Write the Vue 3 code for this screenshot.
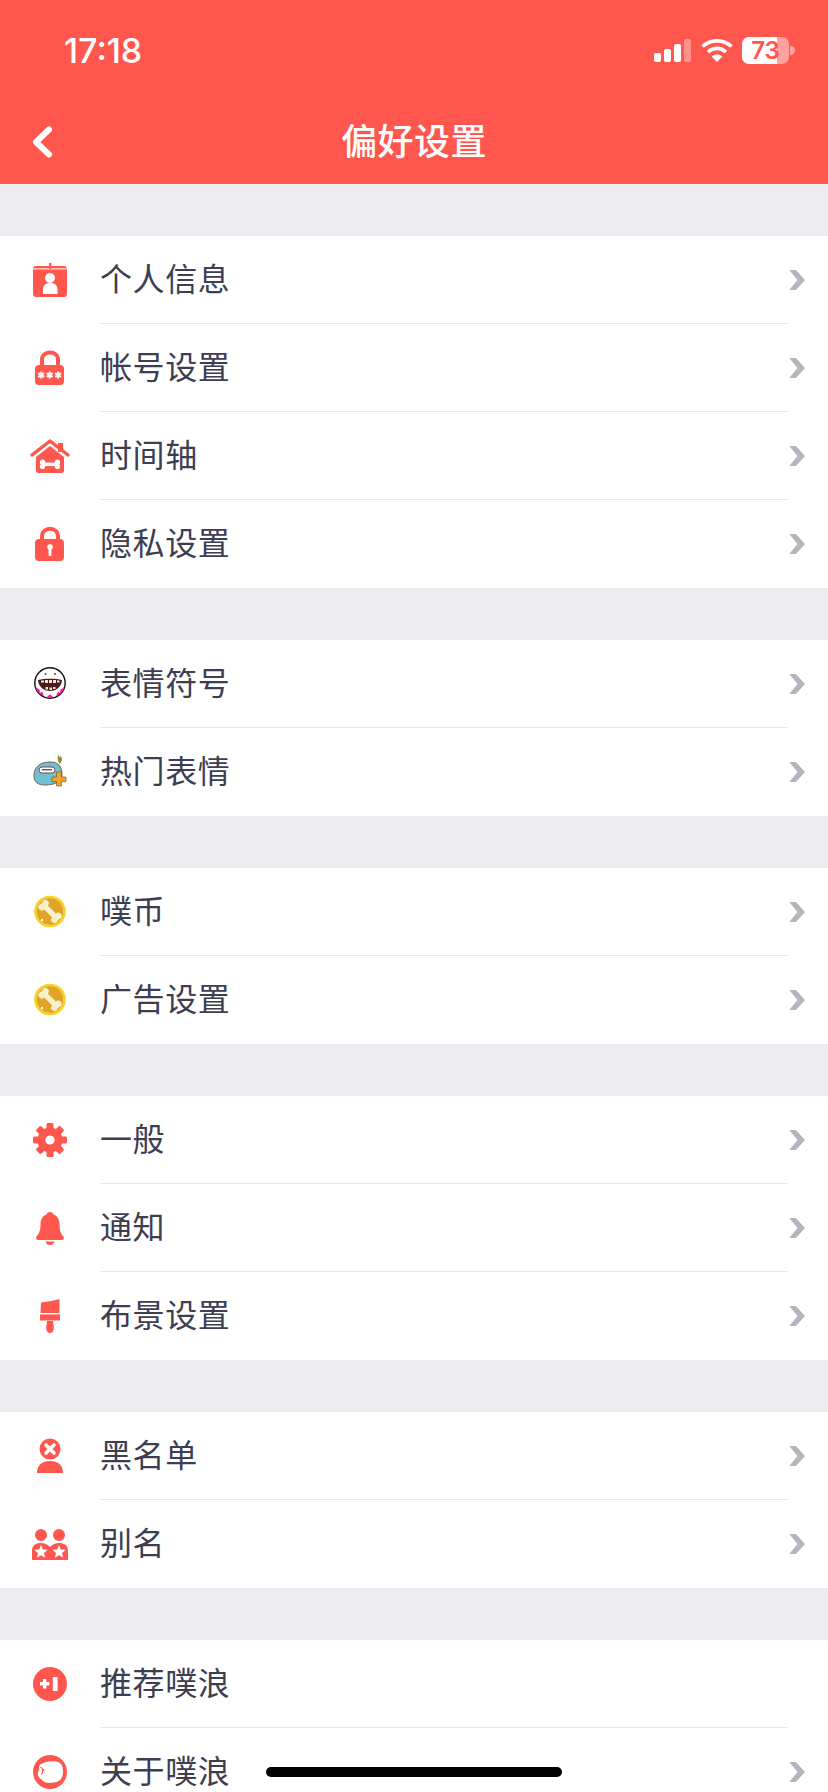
<template>
  <div class="page">
    <header class="header">
      <div class="status">
        <span class="time">17:18</span>
        <svg class="signal" width="37" height="24" viewBox="0 0 37 24">
          <rect x="0" y="15" width="7" height="9" rx="2" fill="#fff" />
          <rect x="10" y="11" width="7" height="13" rx="2" fill="#fff" />
          <rect x="20" y="6" width="7" height="18" rx="2" fill="#fff" />
          <rect x="30" y="1" width="7" height="23" rx="2" fill="#fff" opacity="0.35" />
        </svg>
        <svg class="wifi" width="32" height="24" viewBox="0 0 32 24">
          <path d="M1.5 8.5C9.5 1 22.5 1 30.5 8.5" fill="none" stroke="#fff" stroke-width="3.6" />
          <path d="M7 14C12.5 9.2 19.5 9.2 25 14" fill="none" stroke="#fff" stroke-width="3.6" />
          <path d="M16 24L10.6 18.4C13.6 15.8 18.4 15.8 21.4 18.4Z" fill="#fff" />
        </svg>
        <div class="battery">
          <div class="battery-fill"></div>
          <span class="battery-text">73</span>
        </div>
        <div class="battery-nub"></div>
      </div>
      <div class="nav">
        <svg class="back" width="22" height="32" viewBox="0 0 22 32">
          <path d="M18 3.5L5 16L18 28.5" fill="none" stroke="#fff" stroke-width="6" stroke-linecap="round" stroke-linejoin="round" />
        </svg>
        <h1 class="title">偏好设置</h1>
      </div>
    </header>

    <main class="content">
      <section v-for="(group, i) in groups" :key="i" class="group">
        <div v-for="item in group" :key="item.label" class="row">
          <svg class="icon" width="48" height="48" viewBox="0 0 48 48">
            <template v-if="item.icon === 'card'">
              <rect x="7" y="10" width="34" height="31" rx="3" fill="#ff574d" />
              <rect x="7" y="12.4" width="34" height="1" fill="#fff" />
              <rect x="23" y="7" width="2.4" height="6" fill="#ff574d" />
              <circle cx="24" cy="22" r="5" fill="#fff" />
              <path d="M17 38V33.5C17 29 20 27 24.2 27C28.4 27 31.5 29 31.5 33.5V38Z" fill="#fff" />
            </template>
            <template v-else-if="item.icon === 'pwlock'">
              <path d="M16 23V16C16 6 32 6 32 16V23" fill="none" stroke="#ff574d" stroke-width="4" />
              <rect x="9" y="21" width="29" height="20" rx="4" fill="#ff574d" />
              <g fill="none" stroke="#fff" stroke-width="2">
                <path v-for="x in [15.2, 23.6, 32]" :key="x" :d="`M${x} 27.6V34.4M${x - 3} 29.2L${x + 3} 32.8M${x + 3} 29.2L${x - 3} 32.8`" />
              </g>
            </template>
            <template v-else-if="item.icon === 'house'">
              <rect x="32" y="11" width="5" height="9" fill="#ff574d" />
              <path d="M10 25L24 14L38 25V38.5C38 40 37 41 35.5 41H12.5C11 41 10 40 10 38.5Z" fill="#ff574d" />
              <path d="M6 23L24 9L42 23" fill="none" stroke="#ff574d" stroke-width="3.4" stroke-linecap="round" stroke-linejoin="round" />
              <rect x="17" y="30.5" width="14" height="3.6" fill="#fff" />
              <circle cx="16.5" cy="30" r="2.6" fill="#fff" />
              <circle cx="16.5" cy="34.4" r="2.6" fill="#fff" />
              <circle cx="31.5" cy="30" r="2.6" fill="#fff" />
              <circle cx="31.5" cy="34.4" r="2.6" fill="#fff" />
            </template>
            <template v-else-if="item.icon === 'lock'">
              <path d="M16 22V17C16 6 32 6 32 17V22" fill="none" stroke="#ff574d" stroke-width="4" />
              <rect x="9" y="19" width="29" height="22" rx="4" fill="#ff574d" />
              <circle cx="24" cy="27" r="2.8" fill="#fff" />
              <rect x="22.6" y="27" width="2.8" height="9" fill="#fff" />
            </template>
            <template v-else-if="item.icon === 'ghost'">
              <circle cx="24" cy="23" r="15.2" fill="#fff" stroke="#111" stroke-width="1.4" />
              <path d="M9.8 27.5L13.5 29.5L14 33L16 31.5L18 36L14.5 34.5C12 33 10.6 30.5 9.8 27.5Z" fill="#f0189c" />
              <path d="M38.2 27.5L34.5 29.5L34 33L32 31.5L30 36L33.5 34.5C36 33 37.4 30.5 38.2 27.5Z" fill="#f0189c" />
              <path d="M21 36.5L24 34.5L27 36.5L24 37.8Z" fill="#f0189c" />
              <circle cx="19.5" cy="14" r="1" fill="#7a3a3a" />
              <circle cx="29" cy="14" r="1" fill="#7a3a3a" />
              <path d="M12 20C18 18.4 30 18.4 36 20C35.6 26.5 30.5 31 24 31C17.5 31 12.4 26.5 12 20Z" fill="#4a1c1c" />
              <path d="M15 20.4H18V22.6H15ZM19 20H22V23H19ZM23 20H26V23H23ZM27 20H30V23H27ZM31 20.4H33.5V22.6H31ZM19.5 27H22V29.5H19.5ZM23.5 27.5H26V30H23.5ZM27 27H29.5V29H27Z" fill="#eee3d6" />
            </template>
            <template v-else-if="item.icon === 'monster'">
              <path d="M33 15C32 12 31 10 32 7L34 10L35 7L36 12L34 16Z" fill="#8a8a2a" />
              <path d="M8 28C8 19 14 14 24 14C32 14 36 18 36 27C36 34 28 37 19 37C12 37 8 34 8 28Z" fill="#70c0d0" stroke="#7a5a54" stroke-width="1" />
              <rect x="13" y="19" width="16" height="6" rx="3" fill="#fff" stroke="#7a4a44" stroke-width="1" />
              <rect x="16" y="21" width="10" height="1.4" fill="#7a4a44" />
              <path d="M30.6 24H35.4V29H40V33.6H35.4V38H30.6V33.6H26V29H30.6Z" fill="#f5a623" stroke="#7a5a30" stroke-width="0.7" />
            </template>
            <template v-else-if="item.icon === 'coin'">
              <circle cx="24" cy="23.5" r="15.8" fill="#f8d22c" />
              <circle cx="24" cy="23.5" r="13.2" fill="#e0a428" />
              <g transform="rotate(45 24 23.5)">
                <rect x="15" y="20.7" width="18" height="5.6" fill="#f8f0c8" />
                <circle cx="15" cy="20.8" r="3.3" fill="#f8f0c8" />
                <circle cx="15" cy="26.2" r="3.3" fill="#f8f0c8" />
                <circle cx="33" cy="20.8" r="3.3" fill="#f8f0c8" />
                <circle cx="33" cy="26.2" r="3.3" fill="#f8f0c8" />
              </g>
              <circle cx="16" cy="32" r="1.2" fill="#fff" />
            </template>
            <template v-else-if="item.icon === 'gear'">
              <rect v-for="a in [0, 45, 90, 135, 180, 225, 270, 315]" :key="a" x="20.5" y="7" width="7" height="8" rx="1.5" fill="#ff574d" :transform="`rotate(${a} 24 24)`" />
              <circle cx="24" cy="24" r="12.5" fill="#ff574d" />
              <circle cx="24" cy="24" r="4.6" fill="#fff" />
            </template>
            <template v-else-if="item.icon === 'bell'">
              <path d="M24 8C26 8 27 9 27.5 10.5C32 12 33.5 16 33.5 21C33.5 27 35 30 37.5 32.5C38.5 34 37.5 36 36 36H12C10.5 36 9.5 34 10.5 32.5C13 30 14.5 27 14.5 21C14.5 16 16 12 20.5 10.5C21 9 22 8 24 8Z" fill="#ff574d" />
              <path d="M19.5 37.5H28.5C28 40 26 41 24 41C22 41 20 40 19.5 37.5Z" fill="#ff574d" />
            </template>
            <template v-else-if="item.icon === 'brush'">
              <path d="M15 10.5C20 10 27 9 33.5 7V21H14.5Z" fill="#ff574d" />
              <rect x="14" y="22.5" width="20" height="6" fill="#ff574d" />
              <path d="M21 29H27C26.8 31 27.8 33.5 27.8 36C27.8 39 26 41 24 41C22 41 20.2 39 20.2 36C20.2 33.5 21.2 31 21 29Z" fill="#ff574d" />
            </template>
            <template v-else-if="item.icon === 'block'">
              <circle cx="24" cy="17" r="10.5" fill="#ff574d" />
              <path d="M20 13L28 21M28 13L20 21" stroke="#fff" stroke-width="3.6" stroke-linecap="round" />
              <path d="M11 41C11 33 16 29 24 29C32 29 37 33 37 41Z" fill="#ff574d" />
            </template>
            <template v-else-if="item.icon === 'alias'">
              <circle cx="15" cy="15" r="6" fill="#ff574d" />
              <circle cx="33" cy="15" r="6" fill="#ff574d" />
              <path d="M6 39V31C6 25 10 23 15 23C19 23 22 25 24 27C26 25 29 23 33 23C38 23 42 25 42 31V39C42 39.6 41.6 40 41 40H7C6.4 40 6 39.6 6 39Z" fill="#ff574d" />
              <polygon v-for="x in [15, 33]" :key="x" :points="starPoints(x, 32, 7)" fill="#fff" />
            </template>
            <template v-else-if="item.icon === 'plus'">
              <circle cx="24" cy="24" r="17" fill="#ff574d" />
              <path d="M14 22H17V19H20.4V22H23.4V25.4H20.4V28.4H17V25.4H14ZM26.8 17H31.6V31H26.8Z" fill="#fff" />
            </template>
            <template v-else-if="item.icon === 'pig'">
              <circle cx="24" cy="24" r="17" fill="#ff574d" />
              <path d="M13 19C13 17 14.5 15.5 16 16C19 13 27 12.5 32 14C36.5 15.5 37 20 37 24C37 30 34 34 28 34.5C23 35.5 18 35 15.5 31.5C13 30 11 27 12 24.5C12.8 23 13 21 13 19Z" fill="#fff" />
              <path d="M14.5 19C17.5 20 17.5 25 15 26.5" fill="none" stroke="#ff574d" stroke-width="1.2" />
              <circle cx="17.5" cy="22" r="1" fill="#ff574d" />
            </template>
          </svg>
          <div class="row-body">{{ item.label }}</div>
          <div class="arrow">
            <svg v-if="item.arrow !== false" width="15" height="20" viewBox="0 0 15 20">
              <path d="M0 0H6L15 10L6 20H0V19L7.5 10L0 1Z" fill="#b5b5bd" />
            </svg>
          </div>
        </div>
      </section>
    </main>

    <div class="home-bar"></div>
  </div>
</template>

<script setup>
const groups = [
  [
    { label: '个人信息', icon: 'card' },
    { label: '帐号设置', icon: 'pwlock' },
    { label: '时间轴', icon: 'house' },
    { label: '隐私设置', icon: 'lock' },
  ],
  [
    { label: '表情符号', icon: 'ghost' },
    { label: '热门表情', icon: 'monster' },
  ],
  [
    { label: '噗币', icon: 'coin' },
    { label: '广告设置', icon: 'coin' },
  ],
  [
    { label: '一般', icon: 'gear' },
    { label: '通知', icon: 'bell' },
    { label: '布景设置', icon: 'brush' },
  ],
  [
    { label: '黑名单', icon: 'block' },
    { label: '别名', icon: 'alias' },
  ],
  [
    { label: '推荐噗浪', icon: 'plus', arrow: false },
    { label: '关于噗浪', icon: 'pig' },
  ],
]

// five pointed star around cx, cy
const starPoints = (cx, cy, r) => {
  const pts = []
  for (let i = 0; i < 10; i++) {
    const radius = i % 2 === 0 ? r : r * 0.45
    const a = (Math.PI / 5) * i - Math.PI / 2
    pts.push(`${(cx + radius * Math.cos(a)).toFixed(2)},${(cy + radius * Math.sin(a)).toFixed(2)}`)
  }
  return pts.join(' ')
}
</script>

<style scoped>
.page {
  position: relative;
  width: 828px;
  height: 1792px;
  overflow: hidden;
  background-color: #ecebf0;
  font-family: "Noto Sans CJK SC", "Noto Sans", sans-serif;
}

.header {
  height: 184px;
  background-color: #ff574d;
  color: #fff;
}

.status {
  display: flex;
  align-items: center;
  height: 100px;
  padding-left: 64px;
  padding-right: 33px;
}

.time {
  flex: 1;
  font-family: Inter, "Liberation Sans", sans-serif;
  font-size: 34px;
  font-weight: 500;
}

.signal {
  margin-right: 10px;
}

.wifi {
  margin-right: 9px;
}

.battery {
  position: relative;
  width: 47px;
  height: 27px;
  border-radius: 7px;
  background-color: rgba(255, 255, 255, 0.45);
  display: flex;
  align-items: center;
  justify-content: center;
}

.battery-fill {
  position: absolute;
  left: 0;
  top: 0;
  bottom: 0;
  width: 35px;
  border-radius: 7px 0 0 7px;
  background-color: #fff;
}

.battery-text {
  position: relative;
  font-family: Inter, "Liberation Sans", sans-serif;
  font-size: 24px;
  font-weight: 600;
  line-height: 27px;
  color: #ff574d;
}

.battery-nub {
  width: 5px;
  height: 9px;
  margin-left: 1px;
  border-radius: 0 5px 5px 0;
  background-color: rgba(255, 255, 255, 0.45);
}

.nav {
  position: relative;
  display: flex;
  align-items: center;
  justify-content: center;
  height: 84px;
}

.back {
  position: absolute;
  left: 31px;
  top: 26px;
}

.title {
  margin: 0 0 6px;
  font-size: 36px;
  font-weight: 500;
  letter-spacing: 0.4px;
  line-height: 48px;
}

.content {
  display: flex;
  flex-direction: column;
  gap: 52px;
  padding-top: 52px;
}

.group {
  background-color: #fff;
}

.row {
  display: flex;
  align-items: center;
  height: 88px;
}

.icon {
  flex-shrink: 0;
  margin-left: 26px;
  margin-right: 26px;
}

.row-body {
  flex: 1;
  height: 88px;
  box-sizing: border-box;
  border-bottom: 1px solid #e8e8ea;
  font-size: 32px;
  letter-spacing: 0.6px;
  line-height: 83px;
  color: #3e3e52;
}

.row:last-child .row-body {
  border-bottom: none;
}

.arrow {
  display: flex;
  justify-content: flex-end;
  width: 40px;
  padding-right: 23px;
  box-sizing: border-box;
}

.home-bar {
  position: absolute;
  left: 266px;
  bottom: 15px;
  width: 296px;
  height: 10px;
  border-radius: 5px;
  background-color: #000;
}
</style>
